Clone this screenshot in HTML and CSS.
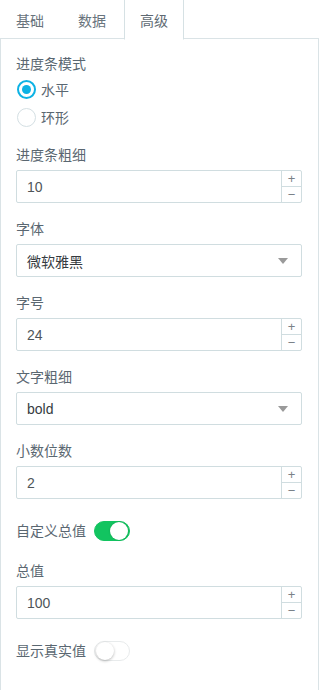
FILE: index.html
```html
<!DOCTYPE html>
<html lang="zh">
<head>
<meta charset="utf-8">
<title>设置</title>
<link rel="stylesheet" href="styles.css">
</head>
<body>
<div class="tabs">
  <div class="tab">基础</div>
  <div class="tab">数据</div>
  <div class="tab active">高级</div>
</div>
<div class="panel">
  <div class="label">进度条模式</div>
  <div class="radio-group">
    <div class="radio-row"><span class="radio checked"></span><span class="radio-text">水平</span></div>
    <div class="radio-row"><span class="radio"></span><span class="radio-text">环形</span></div>
  </div>

  <div class="item">
    <div class="label">进度条粗细</div>
    <div class="field">
      <span class="value">10</span>
      <span class="spin"><span class="spin-btn">+</span><span class="spin-btn">−</span></span>
    </div>
  </div>

  <div class="item">
    <div class="label">字体</div>
    <div class="field select">
      <span class="value dark">微软雅黑</span>
      <span class="arrow"></span>
    </div>
  </div>

  <div class="item">
    <div class="label">字号</div>
    <div class="field">
      <span class="value">24</span>
      <span class="spin"><span class="spin-btn">+</span><span class="spin-btn">−</span></span>
    </div>
  </div>

  <div class="item">
    <div class="label">文字粗细</div>
    <div class="field select">
      <span class="value dark">bold</span>
      <span class="arrow"></span>
    </div>
  </div>

  <div class="item">
    <div class="label">小数位数</div>
    <div class="field">
      <span class="value">2</span>
      <span class="spin"><span class="spin-btn">+</span><span class="spin-btn">−</span></span>
    </div>
  </div>

  <div class="switch-row">
    <span class="label-inline">自定义总值</span>
    <span class="switch on"><span class="knob"></span></span>
  </div>

  <div class="item">
    <div class="label">总值</div>
    <div class="field">
      <span class="value">100</span>
      <span class="spin"><span class="spin-btn">+</span><span class="spin-btn">−</span></span>
    </div>
  </div>

  <div class="switch-row">
    <span class="label-inline">显示真实值</span>
    <span class="switch"><span class="knob"></span></span>
  </div>
</div>
</body>
</html>
```

FILE: styles.css
```css
* { box-sizing: border-box; }
html, body {
  margin: 0;
  padding: 0;
  background: #fff;
  overflow: hidden;
}
body {
  font-family: "Liberation Sans", "Noto Sans CJK SC", sans-serif;
  font-size: 14px;
  color: #5a6771;
  width: 319px;
  height: 690px;
}
.tabs {
  display: flex;
  height: 40px;
  margin-top: -1px;
  margin-bottom: -1px;
  position: relative;
  z-index: 1;
}
.tab {
  width: 60px;
  height: 41px;
  margin-right: 2px;
  border: 1px solid transparent;
  display: flex;
  align-items: center;
  justify-content: center;
  padding-top: 1px;
  color: #68737c;
}
.tab.active {
  border-color: #d6e1e4;
  border-bottom-color: #fff;
  background: #fff;
  color: #5e6972;
}
.panel {
  border: 1px solid #dae3e6;
  border-bottom: none;
  padding: 15px 16px 0 15px;
  height: 652px;
}
.label {
  line-height: 20px;
  height: 20px;
}
.radio-group {
  margin-top: 1px;
  margin-bottom: 14px;
}
.radio-row {
  height: 28px;
  display: flex;
  align-items: center;
}
.radio {
  width: 19px;
  height: 19px;
  border-radius: 50%;
  border: 1px solid #d4dfe3;
  display: flex;
  align-items: center;
  justify-content: center;
  margin-left: 1px;
}
.radio.checked {
  border: 2px solid #0db2e4;
}
.radio.checked::after {
  content: "";
  width: 9px;
  height: 9px;
  border-radius: 50%;
  background: #0db2e4;
}
.radio-text {
  margin-left: 5px;
  color: #5a6771;
}
.item {
  margin-bottom: 16px;
}
.item .label {
  margin-bottom: 5px;
}
.field {
  height: 33px;
  border: 1px solid #d0dde0;
  border-radius: 2px;
  display: flex;
  align-items: stretch;
}
.value {
  flex: 1;
  display: flex;
  align-items: center;
  padding-left: 10px;
  color: #4f5559;
  font-size: 14px;
}
.value.dark {
  color: #363b3f;
}
.spin {
  width: 20px;
  border-left: 1px solid #d0dde0;
  display: flex;
  flex-direction: column;
}
.spin-btn {
  flex: 1;
  display: flex;
  align-items: center;
  justify-content: center;
  color: #7a8288;
  font-size: 13px;
  line-height: 1;
}
.spin-btn + .spin-btn {
  border-top: 1px solid #d0dde0;
}
.select .arrow {
  width: 30px;
  display: flex;
  align-items: center;
  justify-content: center;
}
.select .arrow::after {
  content: "";
  width: 0;
  height: 0;
  border-left: 5px solid transparent;
  border-right: 5px solid transparent;
  border-top: 6px solid #9a9a9a;
  margin-right: 6px;
}
.switch-row {
  display: flex;
  align-items: center;
  height: 20px;
  margin-top: 22px;
  margin-bottom: 20px;
}
.label-inline {
  margin-right: 8px;
  line-height: 20px;
}
.switch {
  width: 36px;
  height: 20px;
  border-radius: 10px;
  border: 1px solid #e8ebec;
  background: #fff;
  display: flex;
  align-items: center;
  padding: 0 1px;
}
.switch .knob {
  width: 18px;
  height: 18px;
  border-radius: 50%;
  background: #fff;
  box-shadow: 0 1px 3px rgba(0,0,0,0.28);
}
.switch.on {
  background: #12c460;
  border-color: #12c460;
  justify-content: flex-end;
}
.switch.on .knob {
  box-shadow: 0 0 2px rgba(0,0,0,0.2);
}
```
